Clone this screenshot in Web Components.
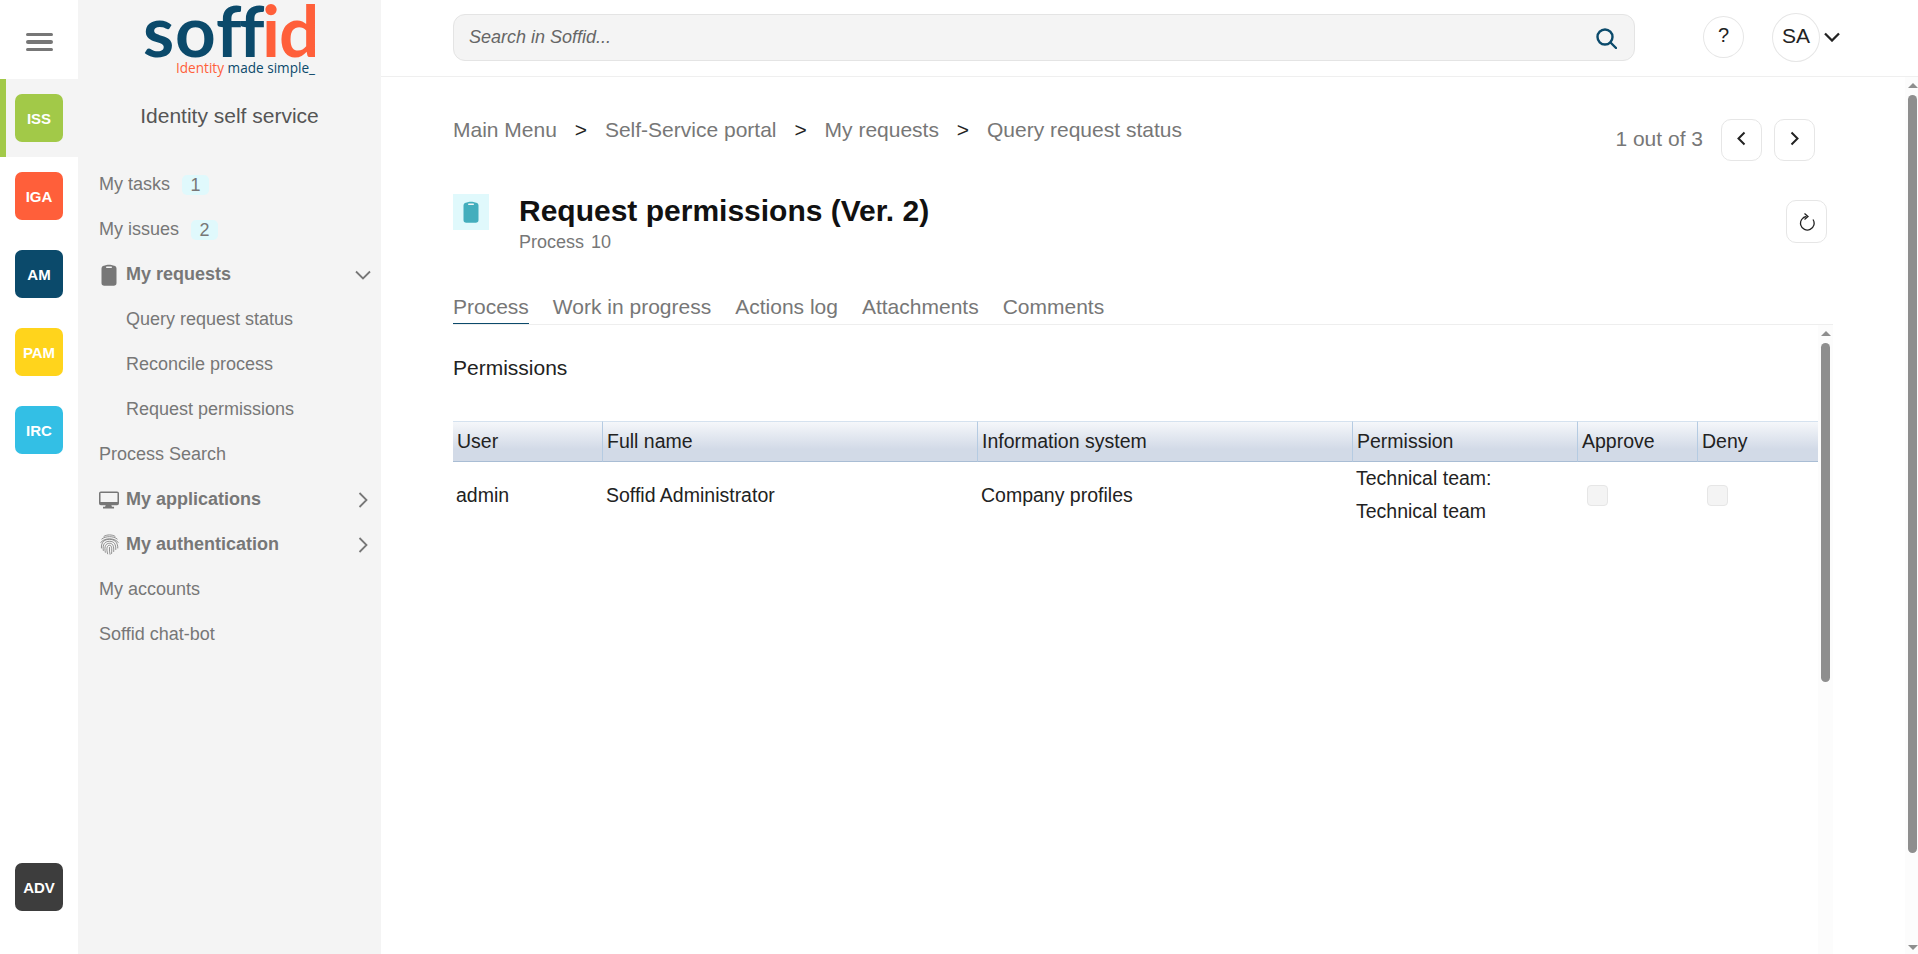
<!DOCTYPE html>
<html>
<head>
<meta charset="utf-8">
<title>Soffid</title>
<style>
  html, body { margin: 0; height: 954px; overflow: hidden; background: #fff; }
  body { font-family: "Liberation Sans", Arial, sans-serif; }
  soffid-app { height: 954px; }
</style>
</head>
<body>
<soffid-app>
  <soffid-rail slot="rail"></soffid-rail>
  <soffid-sidebar slot="sidebar">
    <menu-row badge="1">My tasks</menu-row>
    <menu-row badge="2">My issues</menu-row>
    <menu-row bold icon="clipboard" chevron="down">My requests</menu-row>
    <menu-row sub>Query request status</menu-row>
    <menu-row sub>Reconcile process</menu-row>
    <menu-row sub>Request permissions</menu-row>
    <menu-row>Process Search</menu-row>
    <menu-row bold icon="monitor" chevron="right">My applications</menu-row>
    <menu-row bold icon="fingerprint" chevron="right">My authentication</menu-row>
    <menu-row>My accounts</menu-row>
    <menu-row>Soffid chat-bot</menu-row>
  </soffid-sidebar>
  <soffid-topbar slot="top"></soffid-topbar>
  <soffid-crumbs slot="content"></soffid-crumbs>
  <process-header slot="content"></process-header>
  <tab-strip slot="content"></tab-strip>
  <permissions-panel slot="content"></permissions-panel>
</soffid-app>

<script>
const ICONS = {
  clipboard: `<svg width="16" height="22" viewBox="0 0 16 22"><path fill="currentColor" d="M4 1.500C5 .6 11 .6 12 1.500 14 1.800 15.500 2.500 15.500 4.500V19c0 1.800-1 2.800-2.800 2.800H3.300C1.500 21.800.5 20.800.5 19V4.500C.5 2.500 2 1.800 4 1.500Z"/><rect x="5" y="2.500" width="6" height="1.400" rx=".7" fill="#f4f4f4"/></svg>`,
  monitor: `<svg width="20" height="18" viewBox="0 0 21 18"><path fill="currentColor" d="M2 0h17a2 2 0 0 1 2 2v10.500a2 2 0 0 1-2 2h-6l.6 1.700h2.200V18H4.200v-1.800h2.200l.6-1.700H2a2 2 0 0 1-2-2V2a2 2 0 0 1 2-2Zm-.4 1.700v9.300h17.800V1.700Z"/></svg>`,
  fingerprint: `<svg width="19" height="21" viewBox="0 0 19 21" fill="none" stroke="currentColor" stroke-width=".8" stroke-linecap="round"><path d="M4 2.300C7 .4 12 .4 15 2.300"/><path d="M1.800 5C5.500 1.800 13.500 1.800 17.200 5"/><path d="M.8 8.500C3.500 3.500 15.500 3.500 18.200 8.500"/><path d="M1.400 14C1 7.500 5 5.300 9.500 5.300S18 8 17.800 14"/><path d="M3.300 16.500C2.300 10 5 7.300 9.500 7.300S16 10 15.800 15.500"/><path d="M5.300 18.300C4 12 6 9.300 9.500 9.300S14 12 13.700 17.500"/><path d="M7.600 19.800C6 14 7.300 11.300 9.500 11.300S12 14 11.600 19.500"/><path d="M9.500 13.500C9.300 16 9.500 18.500 10 20.300"/></svg>`,
  chevronDown: `<svg width="16" height="10" viewBox="0 0 16 10" fill="none" stroke="currentColor" stroke-width="1.800"><path d="M1 1.500 8 8.500 15 1.500"/></svg>`,
  chevronRight: `<svg width="10" height="16" viewBox="0 0 10 16" fill="none" stroke="currentColor" stroke-width="1.800"><path d="M1.500 1 8.500 8 1.500 15"/></svg>`,
};

// page frame: rail, sidebar and the main column with its scrollbar
class SoffidApp extends HTMLElement {
  constructor() {
    super();
    this.attachShadow({ mode: "open" });
  }

  connectedCallback() {
    this.shadowRoot.innerHTML = `
      <style>
        :host { display: flex; width: 1918px; overflow: hidden; }
        .main { flex: 1; display: flex; flex-direction: column; min-width: 0; }
        .body { flex: 1; display: flex; min-height: 0; }
        .content {
          flex: 1;
          display: flex;
          flex-direction: column;
          padding: 0 72px;
          min-width: 0;
        }
      </style>
      <slot name="rail"></slot>
      <slot name="sidebar"></slot>
      <div class="main">
        <slot name="top"></slot>
        <div class="body">
          <div class="content"><slot name="content"></slot></div>
          <fake-scrollbar thumb-top="18" thumb-height="758"></fake-scrollbar>
        </div>
      </div>
    `;
  }
}

class SoffidRail extends HTMLElement {
  constructor() {
    super();
    this.attachShadow({ mode: "open" });
  }

  connectedCallback() {
    const tile = (name, color, active) => `
      <div class="item ${active ? "active" : ""}"><span class="tile" style="background:${color}">${name}</span></div>`;
    this.shadowRoot.innerHTML = `
      <style>
        :host {
          display: flex;
          flex-direction: column;
          width: 78px;
          flex: none;
          background: #fff;
        }
        .burger {
          height: 79px;
          display: flex;
          flex-direction: column;
          align-items: center;
          justify-content: center;
          gap: 4.500px;
          padding-top: 5px;
          box-sizing: border-box;
        }
        .burger i {
          display: block;
          width: 27px;
          height: 3.200px;
          border-radius: 2px;
          background: #777;
        }
        .item {
          height: 78px;
          display: flex;
          align-items: center;
          justify-content: center;
        }
        .item.active {
          background: #f4f4f4;
          box-shadow: inset 6px 0 0 #a2c948;
        }
        .tile {
          width: 48px;
          height: 48px;
          border-radius: 7px;
          display: flex;
          align-items: center;
          justify-content: center;
          color: #fff;
          font: bold 15px "Liberation Sans", Arial, sans-serif;
        }
        .spacer { flex: 1; }
        .bottom { padding-bottom: 28px; }
      </style>
      <div class="burger"><i></i><i></i><i></i></div>
      ${tile("ISS", "#a2c948", true)}
      ${tile("IGA", "#ff5f3a")}
      ${tile("AM", "#0b4a6b")}
      ${tile("PAM", "#ffd41c")}
      ${tile("IRC", "#33bfe5")}
      <div class="spacer"></div>
      <div class="bottom">${tile("ADV", "#3d3d3d")}</div>
    `;
  }
}

class SoffidSidebar extends HTMLElement {
  constructor() {
    super();
    this.attachShadow({ mode: "open" });
  }

  connectedCallback() {
    this.shadowRoot.innerHTML = `
      <style>
        :host {
          display: flex;
          flex-direction: column;
          width: 303px;
          flex: none;
          background: #f4f4f4;
        }
        .logo { height: 79px; display: block; }
        .logo svg { display: block; }
        .logo text { font-variant-ligatures: none; }
        .title {
          height: 83px;
          box-sizing: border-box;
          padding-top: 25px;
          text-align: center;
          font-size: 21px;
          line-height: 24px;
          color: #555;
        }
      </style>
      <div class="logo">
        <svg width="303" height="79" viewBox="0 0 303 79">
          <text y="57" font-family="Lato, sans-serif" font-size="71" font-weight="700"><tspan fill="#0b4a6b" x="65 97 138 161">soff</tspan><tspan fill="#ff5f3a" x="184 201">id</tspan></text>
          <text x="98" y="73" font-family="'Open Sans', sans-serif" font-size="14" textLength="139" lengthAdjust="spacingAndGlyphs"><tspan fill="#ff5f3a">Identity</tspan><tspan fill="#0b4a6b"> made simple_</tspan></text>
        </svg>
      </div>
      <div class="title">Identity self service</div>
      <slot></slot>
    `;
  }
}

class MenuRow extends HTMLElement {
  constructor() {
    super();
    this.attachShadow({ mode: "open" });
  }

  connectedCallback() {
    const icon = this.getAttribute("icon");
    const chevron = this.getAttribute("chevron");
    const badge = this.getAttribute("badge");
    this.shadowRoot.innerHTML = `
      <style>
        :host {
          display: flex;
          align-items: center;
          height: 45px;
          padding-left: 21px;
          padding-right: 10px;
          font-size: 18px;
          color: #777;
        }
        :host([sub]) { padding-left: 48px; }
        :host([bold]) { font-weight: bold; }
        .icon {
          width: 27px;
          flex: none;
          display: flex;
          align-items: center;
          justify-content: flex-start;
        }
        .icon svg { display: block; }
        .icon.clipboard { padding-left: 2px; width: 25px; }
        .icon.fingerprint { padding-left: 1px; width: 26px; }
        .badge {
          margin-left: 12px;
          width: 27px;
          height: 20px;
          border-radius: 5px;
          background: #e0f9fc;
          text-align: center;
          line-height: 20px;
        }
        .chev { margin-left: auto; display: flex; width: 16px; justify-content: center; }
      </style>
      ${icon ? `<span class="icon ${icon}">${ICONS[icon]}</span>` : ""}
      <slot></slot>
      ${badge ? `<span class="badge">${badge}</span>` : ""}
      ${chevron ? `<span class="chev">${chevron === "down" ? ICONS.chevronDown : ICONS.chevronRight}</span>` : ""}
    `;
  }
}

class SoffidTopbar extends HTMLElement {
  constructor() {
    super();
    this.attachShadow({ mode: "open" });
  }

  connectedCallback() {
    this.shadowRoot.innerHTML = `
      <style>
        :host {
          display: flex;
          align-items: center;
          height: 77px;
          box-sizing: border-box;
          border-bottom: 1px solid #efefef;
          padding: 0 0 2px 72px;
          flex: none;
        }
        .search {
          width: 1182px;
          height: 47px;
          box-sizing: border-box;
          border: 1px solid #e4e4e4;
          border-radius: 12px;
          background: #f4f4f4;
          display: flex;
          align-items: center;
          justify-content: space-between;
          padding: 0 17px 0 15px;
          font-size: 18px;
          font-style: italic;
          color: #666;
          margin-top: 1px;
        }
        .search svg { display: block; margin-top: 1px; }
        .help, .avatar {
          box-sizing: border-box;
          border: 1px solid #e6e6e6;
          border-radius: 50%;
          display: flex;
          align-items: center;
          justify-content: center;
          color: #222;
        }
        .help { width: 41px; height: 42px; margin-left: 68px; font-size: 20px; padding-bottom: 3px; }
        .avatar { width: 48px; height: 49px; margin-left: 28px; font-size: 21px; padding-bottom: 2px; }
        .chev { margin-left: 4px; color: #222; display: flex; }
        .chev svg { stroke-width: 2.300; }
      </style>
      <div class="search">
        <span>Search in Soffid...</span>
        <svg width="21" height="21" viewBox="0 0 21 21" fill="none" stroke="#0b4a6b" stroke-width="2.400"><circle cx="9" cy="9" r="7.500"/><path d="M14.500 14.500 20 20" stroke-linecap="round"/></svg>
      </div>
      <span class="help">?</span>
      <span class="avatar">SA</span>
      <span class="chev">${ICONS.chevronDown}</span>
    `;
  }
}

class IconButton extends HTMLElement {
  constructor() {
    super();
    this.attachShadow({ mode: "open" });
  }

  connectedCallback() {
    this.shadowRoot.innerHTML = `
      <style>
        :host {
          display: flex;
          align-items: center;
          justify-content: center;
          box-sizing: border-box;
          width: 41px;
          height: 42px;
          border: 1px solid #e6e6e6;
          border-radius: 10px;
          background: #fff;
          color: #222;
          flex: none;
        }
      </style>
      <slot></slot>
    `;
  }
}

class SoffidCrumbs extends HTMLElement {
  constructor() {
    super();
    this.attachShadow({ mode: "open" });
  }

  connectedCallback() {
    const parts = ["Main Menu", "Self-Service portal", "My requests", "Query request status"];
    this.shadowRoot.innerHTML = `
      <style>
        :host {
          display: flex;
          align-items: flex-start;
          height: 116px;
          box-sizing: border-box;
          padding-top: 41px;
          font-size: 21px;
          color: #777;
        }
        .trail { display: flex; gap: 17.900px; line-height: 24px; }
        .sep { color: #222; }
        .pager {
          margin-left: auto;
          display: flex;
          align-items: center;
          margin-right: 18px;
          color: #777;
          margin-top: 1px;
        }
        .count { margin-right: 18px; padding-bottom: 2px; }
        .pager icon-button + icon-button { margin-left: 12px; }
        .pager svg { display: block; margin-bottom: 4px; }
      </style>
      <div class="trail">
        ${parts.map((p, i) => `${i ? '<span class="sep">&gt;</span>' : ""}<span>${p}</span>`).join("")}
      </div>
      <div class="pager">
        <span class="count">1 out of 3</span>
        <icon-button><svg width="11" height="15" viewBox="0 0 11 15" fill="none" stroke="currentColor" stroke-width="2"><path d="M8.500 1.500 2.500 7.500 8.500 13.500"/></svg></icon-button>
        <icon-button><svg width="11" height="15" viewBox="0 0 11 15" fill="none" stroke="currentColor" stroke-width="2"><path d="M2.500 1.500 8.500 7.500 2.500 13.500"/></svg></icon-button>
      </div>
    `;
  }
}

class ProcessHeader extends HTMLElement {
  constructor() {
    super();
    this.attachShadow({ mode: "open" });
  }

  connectedCallback() {
    this.shadowRoot.innerHTML = `
      <style>
        :host {
          display: flex;
          align-items: flex-start;
          height: 95px;
          padding-top: 1px;
        }
        .badge {
          width: 36px;
          height: 36px;
          flex: none;
          background: #e0f9fc;
          color: #44aebd;
          display: flex;
          align-items: center;
          justify-content: center;
        }
        .badge svg { display: block; }
        .text { margin-left: 30px; }
        h1 {
          margin: 0;
          font-size: 30px;
          line-height: 34px;
          font-weight: bold;
          color: #111;
        }
        .sub { font-size: 18px; line-height: 24px; color: #777; margin-top: 2px; word-spacing: 2px; }
        icon-button { margin-left: auto; margin-right: 6px; margin-top: 6px; height: 43px; }
      </style>
      <div class="badge">${ICONS.clipboard}</div>
      <div class="text">
        <h1>Request permissions (Ver. 2)</h1>
        <div class="sub">Process 10</div>
      </div>
      <icon-button>
        <svg width="16" height="18" viewBox="0 0 16 18" fill="none" stroke="currentColor" stroke-width="1.300"><path d="M7.500 3.500A6.800 6.800 0 1 0 14 6.500"/><path d="M5.500 .5 9 3.500 5.500 6.500"/></svg>
      </icon-button>
    `;
  }
}

class TabStrip extends HTMLElement {
  constructor() {
    super();
    this.attachShadow({ mode: "open" });
  }

  connectedCallback() {
    const tabs = ["Process", "Work in progress", "Actions log", "Attachments", "Comments"];
    this.shadowRoot.innerHTML = `
      <style>
        :host {
          display: flex;
          gap: 24px;
          height: 35px;
          border-bottom: 1px solid #eee;
          font-size: 21px;
          color: #777;
        }
        .tab { height: 35px; line-height: 36px; box-sizing: border-box; }
        .tab.on { border-bottom: 1px solid #0b4a6b; }
      </style>
      ${tabs.map((t, i) => `<div class="tab ${i ? "" : "on"}">${t}</div>`).join("")}
    `;
  }
}

class PermissionsPanel extends HTMLElement {
  constructor() {
    super();
    this.attachShadow({ mode: "open" });
  }

  connectedCallback() {
    const heads = ["User", "Full name", "Information system", "Permission", "Approve", "Deny"];
    this.shadowRoot.innerHTML = `
      <style>
        :host { display: flex; flex: 1; min-height: 0; }
        .inner { flex: 1; min-width: 0; }
        h2 {
          margin: 0;
          padding-top: 31px;
          height: 96px;
          box-sizing: border-box;
          font-size: 21px;
          line-height: 24px;
          font-weight: normal;
          color: #222;
        }
        .grid {
          display: grid;
          grid-template-columns: 150px 375px 375px 225px 120px 120px;
          font-size: 19.500px;
          color: #222;
        }
        .head {
          box-sizing: border-box;
          height: 41px;
          line-height: 38px;
          padding-left: 4px;
          background: linear-gradient(#f5f7fa, #d2dae7 70%);
          border-top: 1px solid #d5e2ef;
          border-bottom: 1px solid #a9bdd4;
          border-right: 1px solid #b5cbe2;
        }
        .head:nth-child(6) { border-right: 0; }
        .cell {
          height: 66px;
          display: flex;
          align-items: center;
          padding-left: 3px;
          line-height: 33px;
        }
        .box {
          width: 21px;
          height: 21px;
          box-sizing: border-box;
          border: 1px solid #e6e6e6;
          border-radius: 4px;
          background: #f4f4f4;
          margin-left: 6px;
        }
      </style>
      <div class="inner">
        <h2>Permissions</h2>
        <div class="grid">
          ${heads.map((h) => `<div class="head">${h}</div>`).join("")}
          <div class="cell">admin</div>
          <div class="cell">Soffid Administrator</div>
          <div class="cell">Company profiles</div>
          <div class="cell"><span>Technical team:<br>Technical team</span></div>
          <div class="cell"><span class="box"></span></div>
          <div class="cell"><span class="box"></span></div>
        </div>
      </div>
      <fake-scrollbar class="wide" no-down thumb-top="18" thumb-height="339"></fake-scrollbar>
    `;
  }
}

class FakeScrollbar extends HTMLElement {
  constructor() {
    super();
    this.attachShadow({ mode: "open" });
  }

  connectedCallback() {
    const top = this.getAttribute("thumb-top");
    const height = this.getAttribute("thumb-height");
    const down = this.hasAttribute("no-down") ? "" : '<div class="down"></div>';
    this.shadowRoot.innerHTML = `
      <style>
        :host {
          display: flex;
          flex-direction: column;
          align-items: center;
          flex: none;
          box-sizing: border-box;
          width: 13px;
          padding: 0 1px 0 3px;
          background: #fcfcfc;
        }
        :host(.wide) { width: 15px; padding: 0 3px; }
        .thumb {
          width: 9px;
          border-radius: 5px;
          background: #8e8e8e;
          margin-top: ${top}px;
          height: ${height}px;
          flex: none;
        }
        .up, .down { width: 0; height: 0; border: 5px solid transparent; flex: none; }
        .up { border-top: 0; border-bottom: 5px solid #8e8e8e; margin-top: 6px; margin-bottom: -11px; }
        .down { border-bottom: 0; border-top: 5px solid #8e8e8e; margin-top: auto; margin-bottom: 4px; }
      </style>
      <div class="up"></div>
      <div class="thumb"></div>
      ${down}
    `;
  }
}

customElements.define("menu-row", MenuRow);
customElements.define("icon-button", IconButton);
customElements.define("fake-scrollbar", FakeScrollbar);
customElements.define("soffid-rail", SoffidRail);
customElements.define("soffid-sidebar", SoffidSidebar);
customElements.define("soffid-topbar", SoffidTopbar);
customElements.define("soffid-crumbs", SoffidCrumbs);
customElements.define("process-header", ProcessHeader);
customElements.define("tab-strip", TabStrip);
customElements.define("permissions-panel", PermissionsPanel);
customElements.define("soffid-app", SoffidApp);
</script>
</body>
</html>
